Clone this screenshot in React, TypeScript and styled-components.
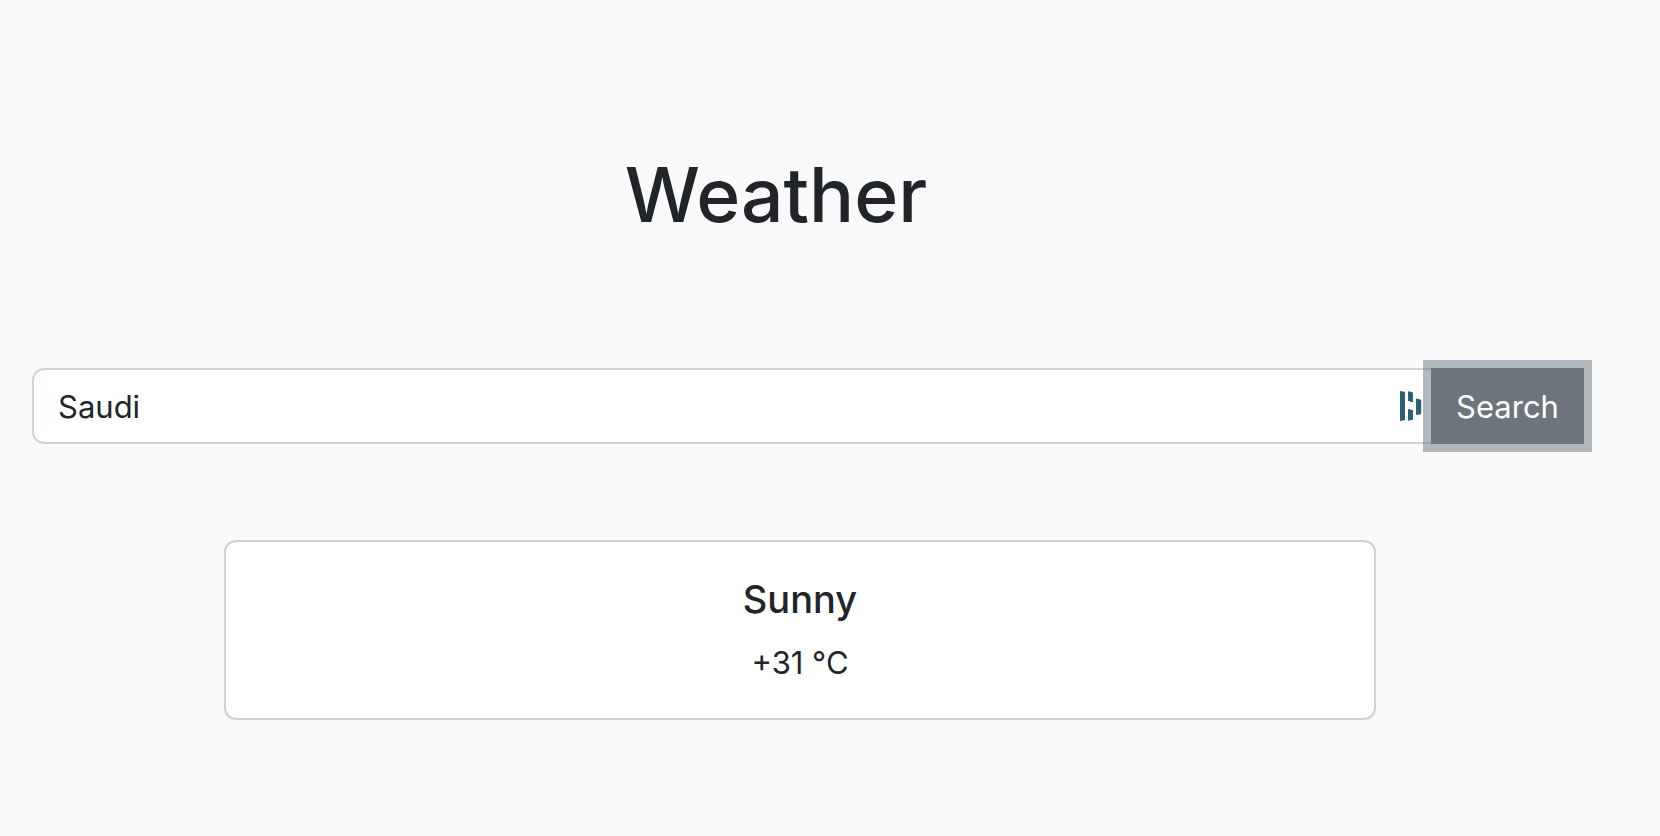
import React, { useState } from "react";
import styled, { createGlobalStyle } from "styled-components";

const GlobalStyle = createGlobalStyle`
  *, *::before, *::after { box-sizing: border-box; }
  body {
    margin: 0;
    background: #fafafa;
    color: #212529;
    font-family: Inter, "Liberation Sans", sans-serif;
    font-size: 31px;
    line-height: 48px;
  }
`;

const Page = styled.main`
  padding: 147px 60px 116px 0;
`;

const Title = styled.h1`
  margin: 0 48px 125px 0;
  font-size: 75px;
  font-weight: 500;
  line-height: 96px;
  text-align: center;
`;

const SearchForm = styled.form`
  display: flex;
  margin: 0 16px 96px 32px;
`;

const Field = styled.div`
  flex: 1;
  display: flex;
  align-items: center;
  height: 76px;
  padding: 0 9px 0 24px;
  background: #fff;
  border: 2px solid #ced4da;
  border-right: 0;
  border-radius: 12px 0 0 12px;
`;

const CityInput = styled.input`
  flex: 1;
  min-width: 0;
  padding: 2px 0 0;
  border: 0;
  outline: 0;
  background: transparent;
  color: inherit;
  font: inherit;
`;

const SearchButton = styled.button`
  width: 153px;
  height: 76px;
  padding: 2px 0 0;
  border: 0;
  background: #6c757d;
  box-shadow: 0 0 0 8px rgba(108, 117, 125, 0.5);
  color: #fff;
  font: inherit;
`;

const Card = styled.section`
  width: 72%;
  margin: 0 auto;
  padding: 33px 32px 31px;
  background: #fff;
  border: 2px solid #d0d0d1;
  border-radius: 12px;
  text-align: center;
`;

const Condition = styled.h2`
  margin: 0 0 16px;
  font-size: 38px;
  font-weight: 500;
  line-height: 48px;
`;

const Temperature = styled.p`
  margin: 0;
`;

const PasswordManagerIcon = () => (
  <svg width="22" height="30" viewBox="0 0 22 30" fill="#2b6174" aria-hidden="true">
    <path d="M.5 0 4.4.8Q5 1 5 1.6V28.4Q5 29 4.4 29.2L.5 30Q0 30 0 29.4V.6Q0 0 .5 0Z" />
    <path d="M8.5.2 12.4 1.3Q13 1.5 13 2.1V10.6Q13 11.3 12.4 11.2L8.6 10Q8 9.8 8 9.2V.8Q8 .2 8.5.2Z" />
    <path d="M8.5 18 12.4 19Q13 19.2 13 19.8V28Q13 28.6 12.4 28.8L8.5 29.8Q8 29.8 8 29.2V18.6Q8 18 8.5 18Z" />
    <path d="M16.5 7.6 20.6 8.5Q21.2 8.7 21.2 9.3V22.4Q21.2 23 20.6 23.2L16.5 24Q16 24 16 23.4V8.2Q16 7.6 16.5 7.6Z" />
  </svg>
);

export default function App() {
  const [city, setCity] = useState("Saudi");
  return (
    <>
      <GlobalStyle />
      <Page>
        <Title>Weather</Title>
        <SearchForm onSubmit={(event: React.FormEvent) => event.preventDefault()}>
          <Field>
            <CityInput
              type="text"
              aria-label="City"
              value={city}
              onChange={(event: React.ChangeEvent<HTMLInputElement>) => setCity(event.target.value)}
            />
            <PasswordManagerIcon />
          </Field>
          <SearchButton type="submit">Search</SearchButton>
        </SearchForm>
        <Card>
          <Condition>Sunny</Condition>
          <Temperature>+31 °C</Temperature>
        </Card>
      </Page>
    </>
  );
}
